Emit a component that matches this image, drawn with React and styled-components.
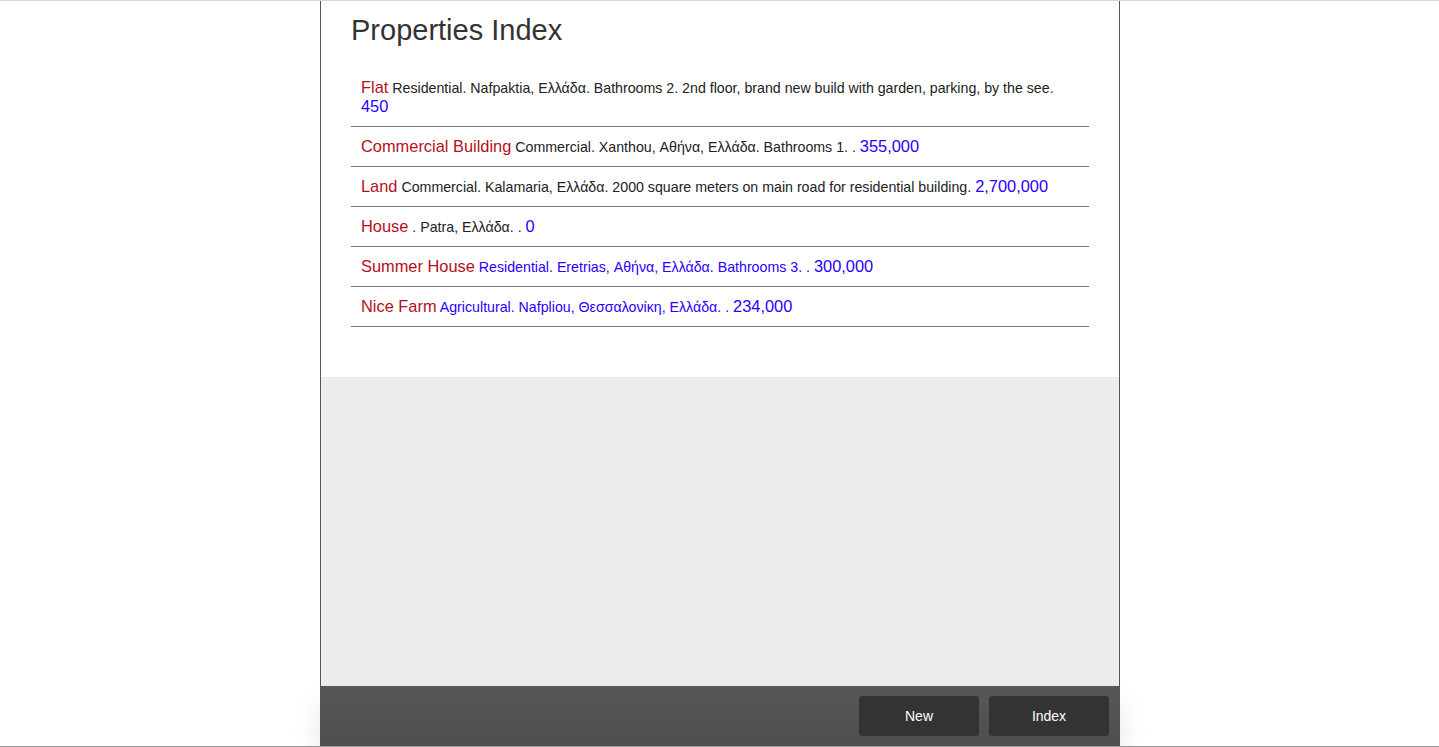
import React from 'react';
import styled, {createGlobalStyle} from 'styled-components';

const GlobalStyle = createGlobalStyle`
  html, body {
    margin: 0;
    padding: 0;
    background: #fff;
  }
  body {
    font-family: "Liberation Sans", Arial, Helvetica, sans-serif;
  }
`;

const properties = [
    {name: 'Flat', details: 'Residential. Nafpaktia, Ελλάδα. Bathrooms 2. 2nd floor, brand new build with garden, parking, by the see.', price: '450'},
    {name: 'Commercial Building', details: 'Commercial. Xanthou, Αθήνα, Ελλάδα. Bathrooms 1. .', price: '355,000'},
    {name: 'Land', details: 'Commercial. Kalamaria, Ελλάδα. 2000 square meters on main road for residential building.', price: '2,700,000'},
    {name: 'House', details: '. Patra, Ελλάδα. .', price: '0'},
    {name: 'Summer House', details: 'Residential. Eretrias, Αθήνα, Ελλάδα. Bathrooms 3. .', price: '300,000', visited: true},
    {name: 'Nice Farm', details: 'Agricultural. Nafpliou, Θεσσαλονίκη, Ελλάδα. .', price: '234,000', visited: true},
];

function App() {
    return (
        <Page>
            <GlobalStyle/>
            <Container>
                <Main>
                    <Title>Properties Index</Title>
                    <List>
                        {properties.map(p => (
                            <Row key={p.name}>
                                <Name>{p.name}</Name>{' '}
                                <Details $visited={p.visited}>{p.details}</Details>{' '}
                                <Price>{p.price}</Price>
                            </Row>
                        ))}
                    </List>
                </Main>
                <Filler/>
                <Footer>
                    <Button>New</Button>
                    <Button>Index</Button>
                </Footer>
            </Container>
        </Page>
    );
}

export default App;

const Page = styled.div`
  height: 100vh;
  box-sizing: border-box;
  border-top: 1px solid #d9d9d9;
  border-bottom: 1px solid #9a9a9a;
  display: flex;
  justify-content: center;
  overflow: hidden;
`;

const Container = styled.div`
  width: 800px;
  box-sizing: border-box;
  border-left: 1px solid #555;
  border-right: 1px solid #555;
  display: flex;
  flex-direction: column;
  margin-left: 1px;
`;

const Main = styled.div`
  background: #fff;
  padding: 12px 30px 50px;
`;

const Title = styled.h1`
  margin: 0 0 20px;
  font-size: 29px;
  font-weight: normal;
  line-height: 35px;
  color: #333;
`;

const List = styled.ul`
  list-style: none;
  margin: 0;
  padding: 0;
`;

const Row = styled.li`
  padding: 10px 10px;
  border-bottom: 1px solid #777;
  font-size: 14.2px;
  line-height: 18px;
  color: #222;
`;

const Name = styled.span`
  font-size: 16.4px;
  color: #b3101b;
`;

const Details = styled.span`
  color: ${p => (p.$visited ? '#2a00ff' : '#222')};
`;

const Price = styled.span`
  font-size: 16.4px;
  color: #2a00ff;
`;

const Filler = styled.div`
  flex: 1;
  background: #ececec;
`;

const Footer = styled.div`
  height: 60px;
  box-sizing: border-box;
  margin: 0 -1px;
  padding: 10px 11px 0 0;
  display: flex;
  justify-content: flex-end;
  gap: 10px;
  background: linear-gradient(#575757, #4e4e4e);
  box-shadow: 0 16px 30px rgba(0, 0, 0, 0.1);
`;

const Button = styled.button`
  width: 120px;
  height: 40px;
  border: none;
  border-radius: 3px;
  background: #333;
  color: #fff;
  font-family: "Liberation Sans", Arial, sans-serif;
  font-size: 14px;
`;
